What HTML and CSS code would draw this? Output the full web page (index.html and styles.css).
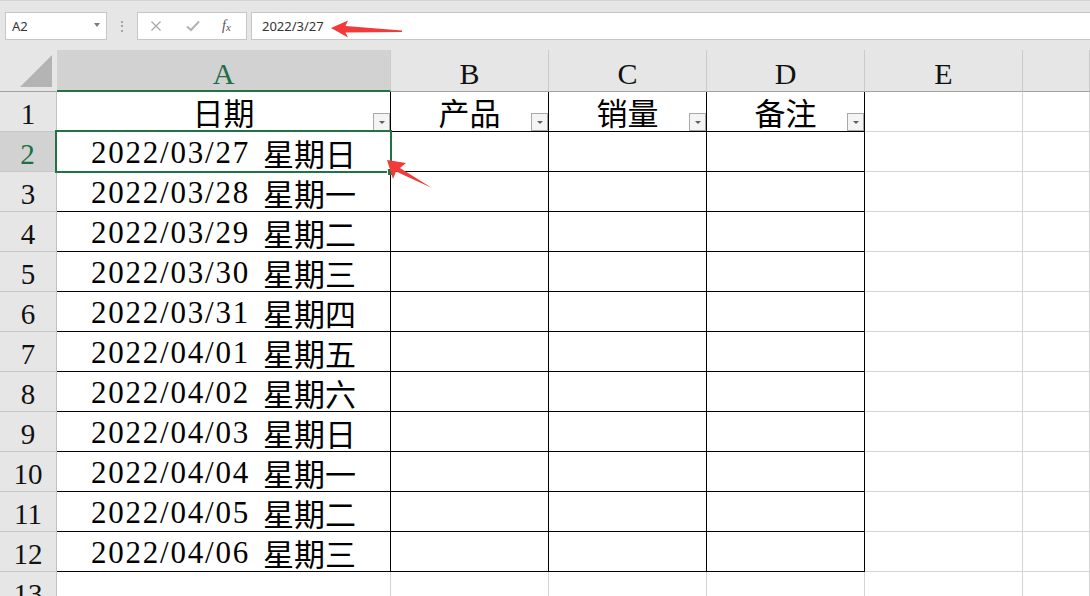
FILE: index.html
```html
<!DOCTYPE html>
<html lang="zh-CN">
<head>
<meta charset="utf-8">
<title>Excel</title>
<link rel="stylesheet" href="styles.css">
</head>
<body>
<div class="app">
  <div class="fbar">
    <div class="namebox"><span class="nb-text">A2</span><span class="nb-caret"></span></div>
    <div class="dots"><i></i><i></i><i></i></div>
    <div class="fbtns">
      <svg class="ico" width="14" height="14" viewBox="0 0 14 14"><path d="M2.5 2.5 L11.5 11.5 M11.5 2.5 L2.5 11.5" stroke="#a9a9a9" stroke-width="1.3" fill="none"/></svg>
      <svg class="ico" width="16" height="14" viewBox="0 0 16 14"><path d="M2 7.5 L6 11 L14 2.5" stroke="#b2b2b2" stroke-width="2" fill="none"/></svg>
      <span class="fx">f<span class="fx-x">x</span></span>
    </div>
    <div class="finput">2022/3/27</div>
  </div>

  <div class="grid">
    <!-- column headers -->
    <div class="corner"><svg width="56" height="41" viewBox="0 0 56 41"><polygon points="52,5 52,37 20,37" fill="#b4b4b4"/></svg></div>
    <div class="ch ch-sel">A</div>
    <div class="ch">B</div>
    <div class="ch">C</div>
    <div class="ch">D</div>
    <div class="ch">E</div>
    <div class="ch"></div>

    <!-- row 1 -->
    <div class="rh">1</div>
    <div class="c t hd"><span class="cjk">日期</span><span class="fbtn"></span></div>
    <div class="c t hd"><span class="cjk">产品</span><span class="fbtn"></span></div>
    <div class="c t hd"><span class="cjk">销量</span><span class="fbtn"></span></div>
    <div class="c t hd"><span class="cjk">备注</span><span class="fbtn"></span></div>
    <div class="c"></div>
    <div class="c"></div>

    <!-- row 2 -->
    <div class="rh rh-sel">2</div>
    <div class="c t"><span class="d">2022/03/27</span><span class="cjk wk">星期日</span></div>
    <div class="c t"></div><div class="c t"></div><div class="c t"></div><div class="c"></div><div class="c"></div>

    <div class="rh">3</div>
    <div class="c t"><span class="d">2022/03/28</span><span class="cjk wk">星期一</span></div>
    <div class="c t"></div><div class="c t"></div><div class="c t"></div><div class="c"></div><div class="c"></div>

    <div class="rh">4</div>
    <div class="c t"><span class="d">2022/03/29</span><span class="cjk wk">星期二</span></div>
    <div class="c t"></div><div class="c t"></div><div class="c t"></div><div class="c"></div><div class="c"></div>

    <div class="rh">5</div>
    <div class="c t"><span class="d">2022/03/30</span><span class="cjk wk">星期三</span></div>
    <div class="c t"></div><div class="c t"></div><div class="c t"></div><div class="c"></div><div class="c"></div>

    <div class="rh">6</div>
    <div class="c t"><span class="d">2022/03/31</span><span class="cjk wk">星期四</span></div>
    <div class="c t"></div><div class="c t"></div><div class="c t"></div><div class="c"></div><div class="c"></div>

    <div class="rh">7</div>
    <div class="c t"><span class="d">2022/04/01</span><span class="cjk wk">星期五</span></div>
    <div class="c t"></div><div class="c t"></div><div class="c t"></div><div class="c"></div><div class="c"></div>

    <div class="rh">8</div>
    <div class="c t"><span class="d">2022/04/02</span><span class="cjk wk">星期六</span></div>
    <div class="c t"></div><div class="c t"></div><div class="c t"></div><div class="c"></div><div class="c"></div>

    <div class="rh">9</div>
    <div class="c t"><span class="d">2022/04/03</span><span class="cjk wk">星期日</span></div>
    <div class="c t"></div><div class="c t"></div><div class="c t"></div><div class="c"></div><div class="c"></div>

    <div class="rh">10</div>
    <div class="c t"><span class="d">2022/04/04</span><span class="cjk wk">星期一</span></div>
    <div class="c t"></div><div class="c t"></div><div class="c t"></div><div class="c"></div><div class="c"></div>

    <div class="rh">11</div>
    <div class="c t"><span class="d">2022/04/05</span><span class="cjk wk">星期二</span></div>
    <div class="c t"></div><div class="c t"></div><div class="c t"></div><div class="c"></div><div class="c"></div>

    <div class="rh">12</div>
    <div class="c t"><span class="d">2022/04/06</span><span class="cjk wk">星期三</span></div>
    <div class="c t"></div><div class="c t"></div><div class="c t"></div><div class="c"></div><div class="c"></div>

    <div class="rh rh-last">13</div>
    <div class="c"></div><div class="c"></div><div class="c"></div><div class="c"></div><div class="c"></div><div class="c"></div>
  </div>

  <div class="selbox"><i class="handle"></i></div>

  <svg class="arrows" width="1090" height="596" viewBox="0 0 1090 596">
    <polygon points="331,28 348,20.5 345.5,26 402,30.5 402,32 345.5,32.5 348,37.5" fill="#f23a3a"/>
    <polygon points="387,160 406,163 400,168 432,188 396,171.5 393,179" fill="#f23a3a"/>
  </svg>
</div>
</body>
</html>
```

FILE: styles.css
```css
* { box-sizing: border-box; }
html, body { margin: 0; padding: 0; }
body {
  width: 1090px;
  height: 596px;
  overflow: hidden;
  background: #ffffff;
  font-family: "Liberation Serif", "Noto Sans CJK SC", serif;
}
.app {
  position: relative;
  width: 1090px;
  height: 596px;
  overflow: hidden;
}

/* ---------- formula bar ---------- */
.fbar {
  height: 50px;
  background: #e6e6e6;
  border-top: 1px solid #d4d4d4;
  padding-top: 11px;
  display: flex;
  align-items: flex-start;
  font-family: "Noto Sans", "Noto Sans CJK SC", sans-serif;
}
.namebox {
  margin-left: 5px;
  width: 102px;
  height: 28px;
  background: #fff;
  border: 1px solid #c6c6c6;
  display: flex;
  align-items: center;
  justify-content: space-between;
  padding: 0 6px 0 6px;
}
.nb-text { font-size: 13px; color: #333; }
.nb-caret {
  width: 0; height: 0;
  border-left: 3.5px solid transparent;
  border-right: 3.5px solid transparent;
  border-top: 4px solid #7a7a7a;
  margin-top: -2px;
}
.dots {
  width: 30px;
  height: 28px;
  display: flex;
  flex-direction: column;
  align-items: center;
  justify-content: center;
  gap: 2.5px;
}
.dots i { display: block; width: 2px; height: 2px; background: #a6a6a6; }
.fbtns {
  width: 110px;
  height: 28px;
  background: #fff;
  border: 1px solid #c6c6c6;
  display: flex;
  align-items: center;
  padding-left: 11px;
  gap: 0;
}
.fbtns .ico { display: block; }
.fbtns .ico:first-child { margin-right: 22px; }
.fbtns .ico:nth-child(2) { margin-right: 21px; }
.fx {
  font-family: "Liberation Serif", serif;
  font-style: italic;
  font-size: 14px;
  color: #555;
  line-height: 1;
}
.fx-x { font-size: 11px; position: relative; top: 1px; }
.finput {
  margin-left: 4px;
  flex: 1;
  height: 28px;
  background: #fff;
  border: 1px solid #c6c6c6;
  border-right: none;
  font-size: 13px;
  color: #333;
  line-height: 26px;
  padding-left: 10px;
}

/* ---------- grid ---------- */
.grid {
  display: grid;
  grid-template-columns: 57px 334px 158px 158px 158px 158px 1fr;
  grid-template-rows: 42px repeat(13, 40px);
}
.corner {
  background: #e6e6e6;
  border-bottom: 1px solid #a3a3a3;
  border-right: 1px solid #e6e6e6;
}
.corner svg { display: block; margin-top: 0; }
.ch {
  background: #e6e6e6;
  border-right: 1px solid #cacaca;
  border-bottom: 1px solid #a3a3a3;
  display: flex;
  align-items: flex-end;
  justify-content: center;
  font-size: 30px;
  line-height: 30px;
  padding-bottom: 2px;
  color: #111;
}
.ch-sel {
  background: #d2d2d2;
  border-bottom: 2px solid #217346;
  padding-bottom: 1px;
  color: #1f6e47;
}
.rh {
  background: #e6e6e6;
  border-right: 1px solid #c2c2c2;
  border-bottom: 1px solid #c6c6c6;
  display: flex;
  align-items: flex-end;
  justify-content: center;
  font-size: 29px;
  line-height: 29px;
  padding-bottom: 2px;
  color: #111;
}
.rh-sel {
  background: #d2d2d2;
  border-right: 2px solid #217346;
  color: #1f6e47;
}
.c {
  position: relative;
  background: #fff;
  border-right: 1px solid #d4d4d4;
  border-bottom: 1px solid #d4d4d4;
  display: flex;
  align-items: flex-end;
  justify-content: center;
  font-size: 31px;
  line-height: 31px;
  padding-bottom: 3px;
  color: #000;
  white-space: nowrap;
}
.c.t {
  border-right-color: #000;
  border-bottom-color: #000;
}
.d {
  font-family: "Liberation Serif", serif;
  letter-spacing: 1.8px;
}
.cjk {
  display: inline-block;
  font-family: "Noto Sans CJK SC", sans-serif;
  font-size: 31px;
  line-height: 31px;
  font-weight: 400;
}
.wk { margin-left: 13px; }
.hd { padding-bottom: 4px; }
.hd .cjk { letter-spacing: 0px; }

.fbtn {
  position: absolute;
  right: 0;
  bottom: 0;
  width: 17px;
  height: 18px;
  background: #f4f4f4;
  border: 1px solid #a9a9a9;
}
.fbtn::after {
  content: "";
  position: absolute;
  left: 5px;
  top: 7px;
  width: 0; height: 0;
  border-left: 3px solid transparent;
  border-right: 3px solid transparent;
  border-top: 3px solid #5e5e5e;
}

/* ---------- overlays ---------- */
.selbox {
  position: absolute;
  left: 55px;
  top: 130px;
  width: 337px;
  height: 43px;
  border: 2px solid #217346;
  pointer-events: none;
}
.handle {
  position: absolute;
  right: -4px;
  bottom: -4px;
  width: 7px;
  height: 7px;
  background: #217346;
  border-left: 1px solid #fff;
  border-top: 1px solid #fff;
}
.arrows {
  position: absolute;
  left: 0;
  top: 0;
  pointer-events: none;
}
```
